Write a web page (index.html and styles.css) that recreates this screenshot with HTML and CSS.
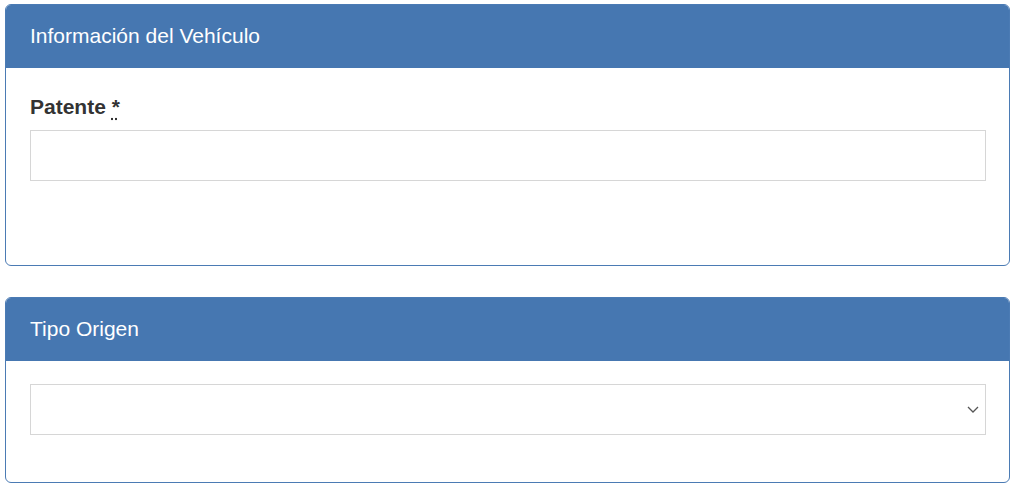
FILE: index.html
```html
<!DOCTYPE html>
<html lang="es">
<head>
<meta charset="utf-8">
<title>Información del Vehículo</title>
<link rel="stylesheet" href="styles.css">
</head>
<body>
  <section class="panel">
    <div class="panel-heading">Información del Vehículo</div>
    <div class="panel-body panel-body--tall">
      <label class="field-label" for="patente">Patente <abbr class="req" title="requerido">*</abbr></label>
      <input class="field-input" id="patente" type="text">
    </div>
  </section>
  <section class="panel">
    <div class="panel-heading">Tipo Origen</div>
    <div class="panel-body">
      <div class="select-wrap">
        <select class="field-input field-select" aria-label="Tipo Origen">
          <option></option>
        </select>
        <svg class="chevron" width="12" height="7" viewBox="0 0 12 7" aria-hidden="true">
          <path d="M1 1l5 5 5-5" fill="none" stroke="#555" stroke-width="1.3"/>
        </svg>
      </div>
    </div>
  </section>
</body>
</html>
```
FILE: styles.css
```css
html, body {
  margin: 0;
  background: #fff;
}
body {
  padding: 4px 5px 0 5px;
  font-family: "Liberation Sans", Arial, sans-serif;
  color: #333;
}
.panel {
  border: 1px solid #4b7bb4;
  border-radius: 6px;
  overflow: hidden;
  margin-bottom: 31px;
  background: #fff;
}
.panel:last-child {
  margin-bottom: 0;
}
.panel-heading {
  background: #4677b1;
  color: #fff;
  font-size: 21px;
  line-height: 24px;
  height: 63px;
  box-sizing: border-box;
  padding: 19px 24px 20px 24px;
}
.panel-body {
  padding: 23px 23px 47px 24px;
}
.panel-body--tall {
  padding-top: 25px;
  padding-bottom: 84px;
}
.field-label {
  display: block;
  font-weight: bold;
  font-size: 21px;
  line-height: 28px;
  margin-bottom: 9px;
  color: #333;
}
.req {
  text-decoration: underline dotted;
  text-underline-offset: 4px;
  cursor: help;
}
.field-input {
  display: block;
  width: 100%;
  height: 51px;
  box-sizing: border-box;
  border: 1px solid #d6d6d6;
  border-radius: 0;
  background: #fff;
  margin: 0;
  font-family: inherit;
  font-size: 16px;
  padding: 0 12px;
}
.select-wrap {
  position: relative;
}
.field-select {
  appearance: none;
  -webkit-appearance: none;
}
.chevron {
  position: absolute;
  right: 7px;
  top: 22px;
  pointer-events: none;
}
```
